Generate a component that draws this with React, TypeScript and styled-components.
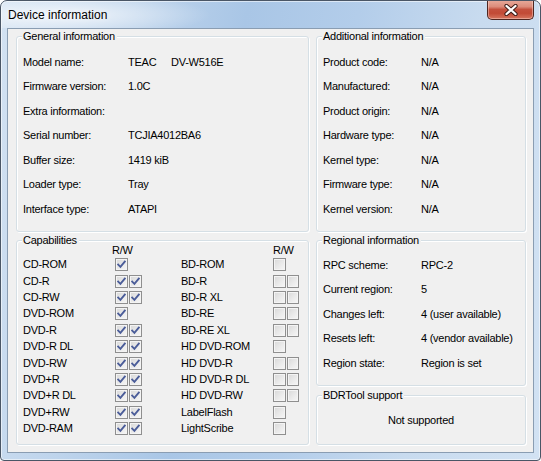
import React from 'react';
import styled, { createGlobalStyle } from 'styled-components';

const Global = createGlobalStyle`
  html, body { margin: 0; padding: 0; background: #ffffff; }
  body { font-family: "Liberation Sans", Arial, sans-serif; }
  #root { width: 541px; height: 461px; }
`;

const Window = styled.div`
  width: 541px;
  height: 461px;
  box-sizing: border-box;
  border: 1px solid #4a5666;
  border-radius: 7px 7px 4px 4px;
  background: linear-gradient(100deg, #d3e2f2 0%, #bed4ec 22%, #a9c6e6 40%, #b3cdea 58%, #c8dbef 78%, #d2e2f3 100%);
  box-shadow: inset 0 0 0 1px rgba(255, 255, 255, 0.55);
  display: flex;
  flex-direction: column;
  overflow: hidden;
`;

const TitleBar = styled.div`
  height: 27px;
  flex: none;
  display: flex;
  align-items: flex-start;
  justify-content: space-between;
  padding: 0 6px 0 7px;
  background: radial-gradient(ellipse 150px 22px at 60px 14px, rgba(255, 255, 255, 0.75), rgba(255, 255, 255, 0) 100%);
`;

const Title = styled.div`
  margin-top: 7px;
  font-size: 12px;
  line-height: 15px;
  color: #000;
  text-shadow: 0 0 6px rgba(255, 255, 255, 0.9);
`;

const CloseButton = styled.div`
  margin-top: -1px;
  width: 45px;
  height: 19px;
  border: 1px solid #4e2620;
  border-top: none;
  border-radius: 0 0 5px 5px;
  background: linear-gradient(180deg, #e8ab9c 0%, #dc8c7b 35%, #c4503d 50%, #c24a36 70%, #d6765f 100%);
  box-shadow: inset 0 0 0 1px rgba(255, 220, 210, 0.45);
  display: flex;
  align-items: center;
  justify-content: center;
`;

const Client = styled.div`
  flex: 1;
  margin: 0 6px 7px 6px;
  border: 1px solid #8a9db2;
  background: #f0f0f0;
  padding: 7px 7px 7px 8px;
  display: grid;
  grid-template-columns: 293px 210px;
  column-gap: 7px;
  font-size: 11px;
  letter-spacing: -0.25px;
  color: #000;
`;

const Column = styled.div`
  display: flex;
  flex-direction: column;
  gap: 8px;
`;

const Group = styled.div<{ $h: number; $mt?: number }>`
  position: relative;
  box-sizing: border-box;
  height: ${p => p.$h}px;
  margin-top: ${p => p.$mt ?? 0}px;
  border: 1px solid #d5dfe5;
  border-radius: 3px;
  box-shadow: inset 1px 1px 0 #ffffff, 1px 1px 0 #ffffff;
`;

const Legend = styled.span`
  position: absolute;
  top: -7px;
  left: 5px;
  padding: 0 2px 0 1px;
  line-height: 13px;
  background: #f0f0f0;
  white-space: nowrap;
`;

const InfoList = styled.div<{ $label: number; $top: number }>`
  padding: ${p => p.$top}px 0 0 6px;
  display: grid;
  grid-template-columns: ${p => p.$label}px 1fr;
  grid-auto-rows: 24.5px;
  align-items: center;
  line-height: 13px;
  white-space: nowrap;
`;

const ValueSplit = styled.div`
  display: flex;
`;

const Vendor = styled.span`
  width: 43px;
`;

const CapGrid = styled.div`
  padding: 2.5px 0 0 6px;
  display: grid;
  grid-template-columns: 92px 66px 92px 26px;
  grid-template-rows: 13px;
  grid-auto-rows: 16.4px;
  align-items: center;
  line-height: 13px;
  white-space: nowrap;
`;

const RWHead = styled.div<{ $shift: number }>`
  margin-left: ${p => p.$shift}px;
`;

const Boxes = styled.div`
  display: flex;
  gap: 1px;
  height: 13px;
`;

const Box = styled.div`
  width: 13px;
  height: 13px;
  box-sizing: border-box;
  border: 1px solid #8f8f8f;
  background: linear-gradient(135deg, #d8d8d8 0%, #eaeaea 55%, #f7f7f7 100%);
  box-shadow: inset 0 0 0 1px #f4f4f4;
  display: flex;
  align-items: center;
  justify-content: center;
`;

const Centered = styled.div`
  height: 100%;
  display: flex;
  align-items: center;
  justify-content: center;
  padding-top: 1px;
  box-sizing: border-box;
  line-height: 13px;
`;

const CheckBox: React.FC<{ checked: boolean }> = ({ checked }) => (
  <Box>
    {checked && (
      <svg width="11" height="11" viewBox="0 0 11 11">
        <path d="M2.2 5.6 L4.4 7.9 L8.8 2.6" fill="none" stroke="#4b5d99" strokeWidth="1.9" strokeLinecap="square" />
      </svg>
    )}
  </Box>
);

const Checks: React.FC<{ v: number[] }> = ({ v }) => (
  <Boxes>
    {v.map((c, i) => (
      <CheckBox key={i} checked={c === 1} />
    ))}
  </Boxes>
);

const general: [string, React.ReactNode][] = [
  ['Model name:', <ValueSplit key="m"><Vendor>TEAC</Vendor><span>DV-W516E</span></ValueSplit>],
  ['Firmware version:', '1.0C'],
  ['Extra information:', ''],
  ['Serial number:', 'TCJIA4012BA6'],
  ['Buffer size:', '1419 kiB'],
  ['Loader type:', 'Tray'],
  ['Interface type:', 'ATAPI'],
];

const additional: [string, string][] = [
  ['Product code:', 'N/A'],
  ['Manufactured:', 'N/A'],
  ['Product origin:', 'N/A'],
  ['Hardware type:', 'N/A'],
  ['Kernel type:', 'N/A'],
  ['Firmware type:', 'N/A'],
  ['Kernel version:', 'N/A'],
];

const regional: [string, string][] = [
  ['RPC scheme:', 'RPC-2'],
  ['Current region:', '5'],
  ['Changes left:', '4 (user available)'],
  ['Resets left:', '4 (vendor available)'],
  ['Region state:', 'Region is set'],
];

const caps: [string, number[], string, number[]][] = [
  ['CD-ROM', [1], 'BD-ROM', [0]],
  ['CD-R', [1, 1], 'BD-R', [0, 0]],
  ['CD-RW', [1, 1], 'BD-R XL', [0, 0]],
  ['DVD-ROM', [1], 'BD-RE', [0, 0]],
  ['DVD-R', [1, 1], 'BD-RE XL', [0, 0]],
  ['DVD-R DL', [1, 1], 'HD DVD-ROM', [0]],
  ['DVD-RW', [1, 1], 'HD DVD-R', [0, 0]],
  ['DVD+R', [1, 1], 'HD DVD-R DL', [0, 0]],
  ['DVD+R DL', [1, 1], 'HD DVD-RW', [0, 0]],
  ['DVD+RW', [1, 1], 'LabelFlash', [0]],
  ['DVD-RAM', [1, 1], 'LightScribe', [0]],
];

export default function App() {
  return (
    <>
      <Global />
      <Window>
        <TitleBar>
          <Title>Device information</Title>
          <CloseButton>
            <svg width="16" height="12" viewBox="0 0 16 12">
              <path d="M3.5 2 L12.5 10 M12.5 2 L3.5 10" stroke="#3a1a15" strokeWidth="4.2" strokeLinecap="round" />
              <path d="M3.5 2 L12.5 10 M12.5 2 L3.5 10" stroke="#ffffff" strokeWidth="2.3" strokeLinecap="round" />
            </svg>
          </CloseButton>
        </TitleBar>
        <Client>
          <Column>
            <Group $h={196}>
              <Legend>General information</Legend>
              <InfoList $label={105} $top={13}>
                {general.map(([l, v]) => (
                  <React.Fragment key={l}>
                    <div>{l}</div>
                    <div>{v}</div>
                  </React.Fragment>
                ))}
              </InfoList>
            </Group>
            <Group $h={205}>
              <Legend>Capabilities</Legend>
              <CapGrid>
                <div />
                <RWHead $shift={-3}>R/W</RWHead>
                <div />
                <RWHead $shift={0}>R/W</RWHead>
                {caps.map(([a, av, b, bv]) => (
                  <React.Fragment key={a}>
                    <div>{a}</div>
                    <Checks v={av} />
                    <div>{b}</div>
                    <Checks v={bv} />
                  </React.Fragment>
                ))}
              </CapGrid>
            </Group>
          </Column>
          <Column>
            <Group $h={196}>
              <Legend>Additional information</Legend>
              <InfoList $label={98} $top={13}>
                {additional.map(([l, v]) => (
                  <React.Fragment key={l}>
                    <div>{l}</div>
                    <div>{v}</div>
                  </React.Fragment>
                ))}
              </InfoList>
            </Group>
            <Group $h={146}>
              <Legend>Regional information</Legend>
              <InfoList $label={98} $top={12}>
                {regional.map(([l, v]) => (
                  <React.Fragment key={l}>
                    <div>{l}</div>
                    <div>{v}</div>
                  </React.Fragment>
                ))}
              </InfoList>
            </Group>
            <Group $h={50} $mt={1}>
              <Legend>BDRTool support</Legend>
              <Centered>Not supported</Centered>
            </Group>
          </Column>
        </Client>
      </Window>
    </>
  );
}
